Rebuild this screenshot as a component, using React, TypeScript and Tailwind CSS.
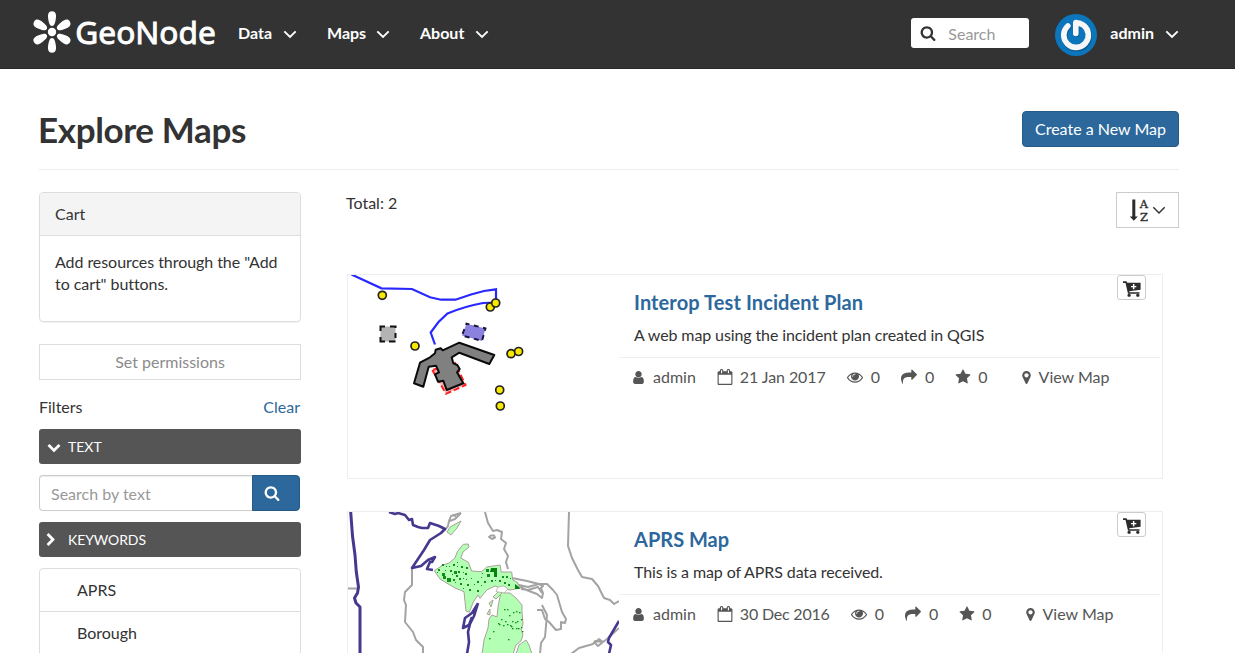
import React from 'react';

const PATHS = {
  search:
    'M1216 832q0-185-131.5-316.5t-316.5-131.5-316.5 131.5-131.5 316.5 131.5 316.5 316.5 131.5 316.5-131.5 131.5-316.5zm512 832q0 52-38 90t-90 38q-54 0-90-38l-343-342q-179 124-399 124-143 0-273.5-55.5t-225-150-150-225-55.5-273.5 55.5-273.5 150-225 225-150 273.5-55.5 273.5 55.5 225 150 150 225 55.5 273.5q0 220-124 399l343 343q37 37 37 90z',
  user: 'M1536 1399q0 109-62.5 187t-150.5 78h-854q-88 0-150.5-78t-62.5-187q0-85 8.5-160.5t31.5-152 58.5-131 94-89 134.5-34.5q131 128 313 128t313-128q76 0 134.5 34.5t94 89 58.5 131 31.5 152 8.5 160.5zm-256-887q0 159-112.5 271.5t-271.5 112.5-271.5-112.5-112.5-271.5 112.5-271.5 271.5-112.5 271.5 112.5 112.5 271.5z',
  star: 'M1728 647q0 22-26 48l-363 354 86 500q1 7 1 20 0 21-10.5 35.5t-30.5 14.5q-19 0-40-12l-449-236-449 236q-22 12-40 12-21 0-31.5-14.5t-10.5-35.5q0-6 2-20l86-500-364-354q-25-27-25-48 0-37 56-46l502-73 225-455q19-41 49-41t49 41l225 455 502 73q56 9 56 46z',
  share:
    'M1792 640q0 26-19 45l-512 512q-19 19-45 19t-45-19-19-45v-256h-224q-98 0-175.5 6t-154 21.5-133 42.5-105.5 69.5-80 101-48.5 138.5-17.5 181q0 55 5 123 0 6 2.5 23.5t2.5 26.5q0 15-8.5 25t-23.5 10q-16 0-28-17-7-9-13-22t-13.5-30-10.5-24q-127-285-127-451 0-199 53-333 162-403 875-403h224v-256q0-26 19-45t45-19 45 19l512 512q19 19 19 45z',
  eye: 'M1664 960q-152-236-381-353 61 104 61 225 0 185-131.5 316.5t-316.5 131.5-316.5-131.5-131.5-316.5q0-121 61-225-229 117-381 353 133 205 333.5 326.5t434.5 121.5 434.5-121.5 333.5-326.5zm-720-384q0-20-14-34t-34-14q-125 0-214.5 89.5t-89.5 214.5q0 20 14 34t34 14 34-14 14-34q0-86 61-147t147-61q20 0 34-14t14-34zm848 384q0 34-20 69-140 230-376.5 368.5t-499.5 138.5-499.5-139-376.5-368q-20-35-20-69t20-69q140-229 376.5-368t499.5-139 499.5 139 376.5 368q20 35 20 69z',
  marker:
    'M1152 640q0-106-75-181t-181-75-181 75-75 181 75 181 181 75 181-75 75-181zm256 0q0 109-33 179l-364 774q-16 33-47.5 52t-67.5 19-67.5-19-46.5-52l-365-774q-33-70-33-179 0-212 150-362t362-150 362 150 150 362z',
  calendar:
    'M192 1664h1408v-1024h-1408v1024zm384-1216v-288q0-14-9-23t-23-9h-64q-14 0-23 9t-9 23v288q0 14 9 23t23 9h64q14 0 23-9t9-23zm768 0v-288q0-14-9-23t-23-9h-64q-14 0-23 9t-9 23v288q0 14 9 23t23 9h64q14 0 23-9t9-23zm384-64v1280q0 52-38 90t-90 38h-1408q-52 0-90-38t-38-90v-1280q0-52 38-90t90-38h128v-96q0-66 47-113t113-47h64q66 0 113 47t47 113v96h384v-96q0-66 47-113t113-47h64q66 0 113 47t47 113v96h128q52 0 90 38t38 90z',
  down: 'M1683 808l-742 741q-19 19-45 19t-45-19l-742-741q-19-19-19-45.5t19-45.5l166-165q19-19 45-19t45 19l531 531 531-531q19-19 45-19t45 19l166 165q19 19 19 45.5t-19 45.5z',
  right:
    'M1363 877l-742 742q-19 19-45 19t-45-19l-166-166q-19-19-19-45t19-45l531-531-531-531q-19-19-19-45t19-45l166-166q19-19 45-19t45 19l742 742q19 19 19 45t-19 45z',
};

function Icon({ name, className }: { name: keyof typeof PATHS; className: string }) {
  return (
    <svg viewBox="0 0 1792 1792" fill="currentColor" className={`shrink-0 overflow-visible ${className}`}>
      <path d={PATHS[name]} />
    </svg>
  );
}

function Angle({ className = '', weight = 1.9 }: { className?: string; weight?: number }) {
  return (
    <svg viewBox="0 0 14 9" className={`h-[9px] w-[14px] shrink-0 ${className}`} fill="none" stroke="currentColor" strokeWidth={weight}>
      <path d="M1.3 1.3 7 7l5.7-5.7" />
    </svg>
  );
}

function Logo() {
  return (
    <svg viewBox="0 0 190 46" className="mr-[-6px] h-[46px] w-[190px] shrink-0 overflow-visible" fill="#fff">
      <g transform="translate(20 23)">
        <circle r="4.2" />
        {[0, 60, 120, 180, 240, 300].map((a) => (
          <path key={a} transform={`rotate(${a})`} d="M0-6C-2.400-6-3.100-9-3.700-12.500C-4.300-16-4.500-20.700 0-20.700S4.300-16 3.700-12.500C3.100-9 2.400-6 0-6Z" />
        ))}
      </g>
      <text x="43.300" y="34.600" fontFamily='"Noto Sans", sans-serif' fontWeight="400" fontSize="31.500" stroke="#fff" strokeWidth=".9" textLength="140.500" lengthAdjust="spacingAndGlyphs">
        GeoNode
      </text>
    </svg>
  );
}

function Avatar() {
  return (
    <svg viewBox="0 0 42 42" className="h-[42px] w-[42px] shrink-0" fill="none">
      <circle cx="21" cy="21" r="21" fill="#0c76bd" />
      <g strokeLinecap="round" strokeLinejoin="round">
        <path d="M13 12.200A12.400 12.400 0 1 0 28.500 11.500Q25.500 9 20.800 8.800V19.500" stroke="#0a5b96" strokeWidth="6" transform="translate(.5 .7)" />
        <path d="M12.800 12A12.300 12.300 0 1 0 28.500 11.300Q25.500 9 20.800 8.600V19.500" stroke="#f7f7f7" strokeWidth="5.600" />
      </g>
    </svg>
  );
}

function CartIcon() {
  return (
    <svg viewBox="0 0 18 16" className="h-4 w-[18px]" fill="#2b2b2b">
      <path d="M0 .3h3.500l.8 1.500H17.600v7L6.200 10.200l.3 1H16.500v1.600H5L2.500 2H0z" />
      <rect x="4.500" y="13" width="3.200" height="2.700" rx="1" />
      <rect x="13.200" y="13" width="3.200" height="2.700" rx="1" />
      <path d="M8 4.900h1.900V3h1.500v1.900h1.900v1.400h-1.900v1.900H9.900V6.300H8z" fill="#fff" />
    </svg>
  );
}

function IncidentPlan() {
  const dots = [[34.3, 20.3], [142.3, 32], [147.7, 28], [67, 71], [163, 78.7], [170.6, 76.5], [151.7, 115], [152.3, 131]];
  return (
    <svg viewBox="0 0 271 203" className="h-[203px] w-[271px]" fill="none">
      <path d="M3.500-.5 33.500 13.300 64 14 82 22.300 93 24.700H107.500L123 19.500 136 16 148 14.300V27.500L135 28Q116 31.500 99.500 38.500L90.500 47 82.700 57.500 87 69.500" stroke="#2929ff" strokeWidth="2.200" />
      <rect x="32.500" y="51.500" width="15" height="15" fill="#b3b3b3" />
      <path d="M32.500 56V51.500H37M42 51.500h5.500V53M47.500 58v5M47.500 66.500H41M37 66.500h-4.500V62" stroke="#111" strokeWidth="2" />
      <path d="m118.500 48.700 19 4.700-3.500 12.500-20-5.400z" fill="#8b82df" stroke="#15153c" strokeWidth="1.900" strokeDasharray="5 4.500" strokeDashoffset="2" />
      <path d="M84.300 95 98 118.800 117.500 110 107 88z" fill="#f8b0b0" stroke="#f22" strokeWidth="2" strokeDasharray="6 3" />
      <path
        d="M66 108.300 72 87.700 82 82.300 87 78.300 87.700 74.700 92.700 73.300 94.700 75.300 111.300 67.700 146.300 80 141.300 89 111.300 77.700 103.700 82.300 105.300 88.300 109.300 90 111.700 94 109 97.300 115.300 108.300 98.700 115 95.300 105.700 90 106.700 87 99.300 91 97.300 88 90.700 80.700 91.700 75.300 111.700Z"
        fill="#808080"
        stroke="#0a0a0a"
        strokeWidth="2"
        strokeLinejoin="round"
      />
      {dots.map(([x, y]) => (
        <circle key={`${x}-${y}`} cx={x} cy={y} r="4" fill="#f8e800" stroke="#222" strokeWidth="1.700" />
      ))}
    </svg>
  );
}

const SPOTS = [
  [94, 61, 3], [95, 64, 3], [99, 66, 4], [105, 67, 2], [106, 59, 3], [110, 59, 2], [105, 52, 2], [113, 54, 2], [118, 55, 2], [94, 52, 2], [90, 57, 2],
  [102, 58, 2], [111, 66, 2], [112, 71, 2], [119, 72, 2], [121, 77, 2], [129, 69, 2], [129, 78, 2], [138, 57, 3], [139, 62, 3],
  [136, 69, 2], [143, 68, 2], [151, 68, 2], [154, 64, 2], [158, 64, 2], [156, 70, 2], [160, 72, 2],
  [109, 50, 1], [109, 54, 1], [117, 61, 2], [123, 66, 1], [97, 58, 1], [133, 65, 1], [101, 54, 1], [115, 60, 1], [147, 68, 1], [108, 63, 2], [104, 62, 1],
  [115, 66, 1], [118, 67, 1], [126, 72, 1], [133, 73, 1], [162, 66, 1], [107, 70, 1], [115, 76, 1], [134, 61, 1], [89, 60, 1], [98, 54, 1],
];
const FINE_SPOTS = [
  [159, 97], [165, 100], [171, 100], [161, 103], [150, 111], [173, 107], [167, 110], [155, 113], [162, 113], [164, 116], [163, 114], [159, 112], [169, 109],
  [145, 119], [173, 115], [170, 116], [157, 109], [153, 107], [174, 119], [160, 127], [141, 126], [168, 116], [151, 112], [164, 109], [156, 97], [168, 99],
];

function LakesMap() {
  return (
    <svg viewBox="0 0 271 142" className="h-[142px] w-[271px]" fill="none" strokeLinejoin="round">
      <g stroke="#a3a3a3" strokeWidth="2">
        <path d="M113 1 103 4 101 9 100 14 97 18M113 1 107 7 102 9M104 3l4 1" />
        <path d="M64 57V73L57 80 56 88 58 93 57 110 65 120 68 128 75 135V142" />
        <path d="M137 0 140 11 145 19 149 18 154 20 153 27 158 31 156 37 160 44 158 50 160 57M141 25l2-1.500h3l1 2-3 1.500z" />
        <path d="M221 0 220 34 224 46 230 58 234 65 244 67 250 74 256 86 262 88 266 92 271 89" />
        <path d="m164 66 15 3 12 3 8 0 6 6 4 5 5 17 4 7-1 4-4-1v7l-5 1-7-8-4-3-3-9h-5M163 68l8 5 9 2 11-3 4 2-2 2 2 5-1 5-5-4-8-3-9-4M173 77l7 1 10-3 4 6" />
        <path d="m194 93 5 10-2 22-4 6-1 11M223 142l8-6 14-4 2-3 8 1 4-3 12-11M247 131l4-4 4 3-5 4z" />
        <path d="M0 76.500h10" />
      </g>
      <path d="M2.700 0 4.500 24 7 43 8.300 60 10.500 75 9.500 81 6.500 86 8 91 12 95V142" stroke="#44398e" strokeWidth="3" />
      <path
        d="M41 0 47 2 50 1 57 3 61 8 64 7 65 13 70 15 74 16 80 16 82 11 91 14 97 17 93 21 82 28 76 38 70 47 64 56 73 54 80 48 87 45 84 50 82 50 79 57 85 58M130 91 126 104 122 112 120 120 121 130 119 142M129 93 124 101 117 106 115 116 121 113 124 105M271 109 261 126 260 130 263 133 261 142"
        stroke="#44398e"
        strokeWidth="2.600"
      />
      <g fill="#b3ffb3" stroke="#aaa19b" strokeWidth="1">
        <path d="m99 20 3-5 11-6-4 7-6 7z" />
        <path d="M86.300 58.700 95 53 101 51 107 46 109.300 39.700 115.300 32.300 120.300 32 121 35 115 40 112.700 46 120.300 50.300 123.700 59 133.700 59.700 138.700 55 152 53 153.300 60H163.700L164.700 68 169 70 172 76 162 78 152 76 147 74 138.700 78 132 86.300 130 83 125.300 90 121.300 100.300 118 99 116 79.700 107 76 92 67Z" />
        <path d="m153 80 4 1h5l6 5 6 7v7l1 12-2 5 2 6-2 6-5 4-3 9h-31l2-14 4-12 1-9 3-4 5 2 1-10z" />
        <path d="m168 142 3-9 7-5 3 5 3 9z" />
        <path d="m145 85 6-6 3 2-6 6zM141 91l4-3-2 7zM139 102l3-5v6z" />
      </g>
      <path d="M148 79.500 150 75l6-1 4 3-4 4z" fill="#fff" stroke="#aaa19b" strokeWidth=".7" />
      <path d="M143 56h6v9h-3v-5h-4zM167 72l4 3 1 2h-5z" fill="#07820f" />
      <g fill="#138c1b">
        {SPOTS.map(([x, y, s]) => (
          <rect key={`${x}-${y}`} x={x} y={y} width={s} height={s} />
        ))}
        {FINE_SPOTS.map(([x, y]) => (
          <rect key={`${x}-${y}`} x={x} y={y} width="1.500" height="1.300" />
        ))}
      </g>
    </svg>
  );
}

function Stat({ icon, iconClass, className, children }: { icon: keyof typeof PATHS; iconClass: string; className: string; children: React.ReactNode }) {
  return (
    <span className={`flex shrink-0 items-center ${className}`}>
      <Icon name={icon} className={iconClass} />
      {children}
    </span>
  );
}

interface MapItem {
  title: string;
  titleClass: string;
  text: string;
  date: string;
  dateClass: string;
  picture: React.ReactNode;
}

function MapCard({ title, titleClass, text, date, dateClass, picture }: MapItem) {
  return (
    <article className="flex h-[205px] w-[816px] border border-[#eee]">
      <div className="w-[271px] shrink-0 overflow-hidden">{picture}</div>
      <div className="flex-1">
        <div className="mr-[2px] flex h-[83px] justify-between border-b border-[#eee] pl-[15px]">
          <div>
            <h4 className={`mt-[14px] text-[20px] leading-[27px] font-bold whitespace-nowrap text-[#2c689c] ${titleClass}`}>{title}</h4>
            <p className="mt-[8px] leading-[22px] tracking-[-0.11px] whitespace-nowrap">{text}</p>
          </div>
          <button className="mr-[14px] flex h-[25px] w-[29px] items-center justify-center rounded-[3px] border border-[#ccc] bg-white pt-[2px] pl-[1px]">
            <CartIcon />
          </button>
        </div>
        <div className="flex h-[38px] items-center pl-[12px] whitespace-nowrap text-[#555]">
          <Stat icon="user" iconClass="mr-[7px] h-[15px] w-[15px]" className="">admin</Stat>
          <Stat icon="calendar" iconClass="mr-[7px] h-[16px] w-[16px]" className="ml-[21px]">
            <span className={dateClass}>{date}</span>
          </Stat>
          <Stat icon="eye" iconClass="mr-[8px] h-[16px] w-[16px]" className="ml-[21px]">0</Stat>
          <Stat icon="share" iconClass="mr-[8px] h-[16px] w-[16px]" className="ml-[21px]">0</Stat>
          <Stat icon="star" iconClass="mr-[7px] h-[16px] w-[16px]" className="ml-[21px]">0</Stat>
          <Stat icon="marker" iconClass="mr-[5px] h-[15px] w-[15px]" className="ml-[31px]">View Map</Stat>
        </div>
      </div>
    </article>
  );
}

const MAPS: MapItem[] = [
  {
    title: 'Interop Test Incident Plan',
    titleClass: 'tracking-[0.1px]',
    text: 'A web map using the incident plan created in QGIS',
    date: '21 Jan 2017',
    dateClass: 'tracking-[-0.08px]',
    picture: <IncidentPlan />,
  },
  {
    title: 'APRS Map',
    titleClass: '',
    text: 'This is a map of APRS data received.',
    date: '30 Dec 2016',
    dateClass: 'tracking-[-0.2px]',
    picture: <LakesMap />,
  },
];

export default function App() {
  return (
    <div className="h-[653px] w-[1235px] overflow-hidden bg-white font-['Lato',sans-serif] text-[16px] leading-[22px] text-[#333]">
      <header className="flex h-[69px] items-center border-b border-[#2b292b] bg-[#333] pr-[56px] pl-[32px] font-bold text-white">
        <div className="mt-[-5px]">
          <Logo />
        </div>
        <nav className="mt-[-2px] ml-[22px] flex">
          <a className="flex w-[89px] items-center">Data<Angle className="mt-[2px] ml-[11px]" /></a>
          <a className="flex w-[93px] items-center">Maps<Angle className="mt-[2px] ml-[10px]" /></a>
          <a className="flex items-center">About<Angle className="mt-[2px] ml-[11px]" /></a>
        </nav>
        <div className="mt-[-3px] ml-auto flex h-[30px] w-[118px] items-center rounded-[3px] bg-white pl-[9px] font-normal text-[#999]">
          <Icon name="search" className="mr-[12px] h-[16px] w-[16px] text-[#333]" />
          <span className="pt-[2px]">Search</span>
        </div>
        <div className="ml-[26px] flex items-center">
          <div className="mt-[1px]">
            <Avatar />
          </div>
          <span className="mt-[-3px] mr-[11px] ml-[13px]">admin</span>
          <Angle />
        </div>
      </header>

      <main className="pr-[56px] pl-[39px]">
        <div className="flex h-[101px] items-center justify-between border-b border-[#eee] pt-[19px]">
          <h1 className="ml-[-1px] text-[35px] leading-[40px] font-bold tracking-[-0.38px]">Explore Maps</h1>
          <button className="mt-[1px] h-[36px] w-[157px] rounded-[4px] border border-[#265a87] bg-[#2c689c] whitespace-nowrap text-white">Create a New Map</button>
        </div>

        <div className="mt-[22px] flex">
          <aside className="w-[262px] shrink-0">
            <section className="h-[130px] rounded-[4px] border border-[#ddd] shadow-[0_1px_1px_rgba(0,0,0,0.05)]">
              <h2 className="h-[43px] rounded-t-[3px] border-b border-[#ddd] bg-[#f4f4f4] pt-[10px] pl-[15px]">Cart</h2>
              <p className="px-[15px] pt-[15px] tracking-[-0.06px]">Add resources through the "Add to cart" buttons.</p>
            </section>
            <button className="mt-[22px] h-[36px] w-full border border-[#ddd] text-[#8b8b8b]">Set permissions</button>
            <div className="mt-[16px] flex justify-between">
              <span>Filters</span>
              <a className="mr-[1px] text-[#2c689c]">Clear</a>
            </div>
            <div className="mt-[11px] flex h-[35px] items-center rounded-[3px] bg-[#555] pl-[8px] text-[14px] text-white">
              <Icon name="down" className="mr-[7px] h-[14px] w-[14px]" />TEXT
            </div>
            <div className="mt-[11px] flex h-[36px] w-[261px]">
              <div className="flex-1 rounded-l-[4px] border border-r-0 border-[#ccc] pt-[7px] pl-[11px] text-[#999] shadow-[inset_0_1px_1px_rgba(0,0,0,0.075)]">Search by text</div>
              <button className="flex w-[48px] items-center rounded-r-[4px] border border-[#265a87] bg-[#2c689c] pl-[11px] text-white">
                <Icon name="search" className="h-[16px] w-[16px]" />
              </button>
            </div>
            <div className="mt-[11px] flex h-[35px] items-center rounded-[3px] bg-[#555] pl-[5px] text-[14px] tracking-[-0.1px] text-white">
              <Icon name="right" className="mr-[10px] h-[14px] w-[14px]" />KEYWORDS
            </div>
            <ul className="mt-[11px] rounded-t-[4px] border border-[#ddd]">
              <li className="h-[43px] border-b border-[#ddd] pt-[10px] pl-[37px]">APRS</li>
              <li className="h-[43px] border-b border-[#ddd] pt-[10px] pl-[37px]">Borough</li>
            </ul>
          </aside>

          <section className="ml-[45px] flex-1">
            <div className="flex h-[82px] items-start justify-between">
              <span>Total: 2</span>
              <button className="flex h-[36px] w-[63px] items-center border border-[#ccc] pl-[12px]">
                <svg viewBox="0 0 22 26" className="mr-[1px] h-[26px] w-[22px] overflow-visible" fill="#2b2b2b">
                  <path d="M3.300 2.500h3v17h2.500L4.800 23.800.8 19.500h2.500z" />
                  <g fontFamily='"DejaVu Serif", serif' fontSize="11.500" stroke="#2b2b2b" strokeWidth=".3" textAnchor="middle">
                    <text x="15" y="11.300">A</text>
                    <text x="15" y="23.500">Z</text>
                  </g>
                </svg>
                <Angle weight={1.5} />
              </button>
            </div>
            <div className="ml-[1px] flex flex-col gap-[32px]">
              {MAPS.map((item) => (
                <MapCard key={item.title} {...item} />
              ))}
            </div>
          </section>
        </div>
      </main>
    </div>
  );
}
